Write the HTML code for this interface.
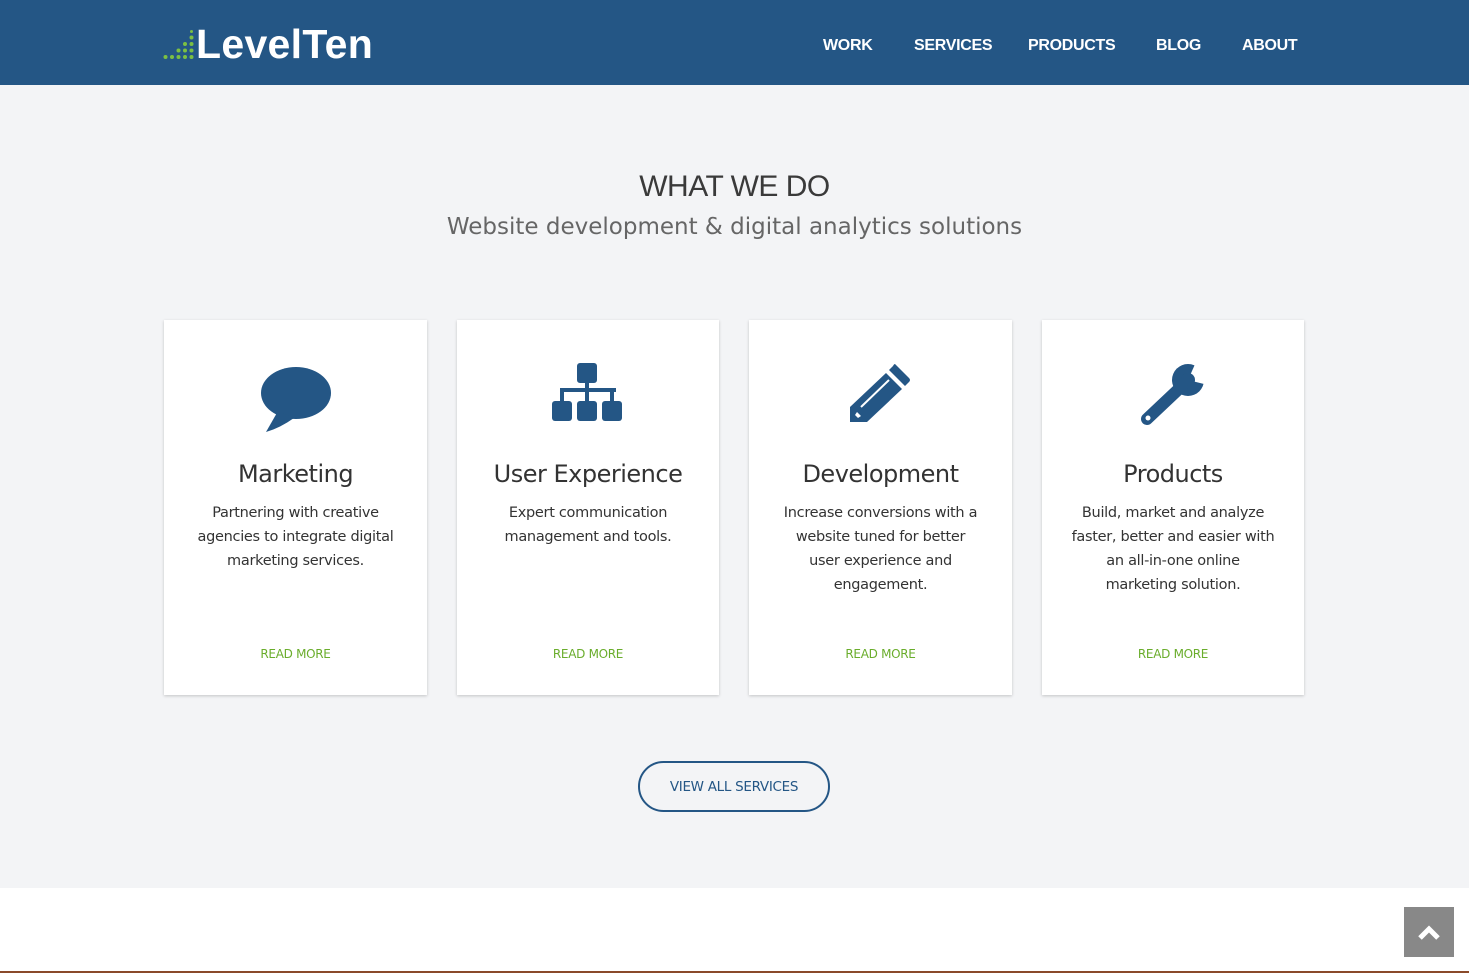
<!DOCTYPE html>
<html><head><meta charset="utf-8"><style>
*{margin:0;padding:0;box-sizing:border-box}
body{width:1469px;height:973px;overflow:hidden;background:#f3f4f6;font-family:"Liberation Sans",sans-serif;position:relative}
.hdr{position:absolute;left:0;top:0;width:1469px;height:85px;background:#245685}
.logo{position:absolute;left:196px;top:22px;color:#fff;font-weight:bold;font-size:41px;letter-spacing:0.3px;line-height:44px}
.nav{position:absolute;top:37px;color:#fff;font-weight:bold;font-size:16px;letter-spacing:-0.3px}
h1{position:absolute;left:0;width:1469px;top:170px;text-align:center;font-weight:normal;font-size:30px;color:#3a3a3a;letter-spacing:-0.5px}
.sub{position:absolute;left:0;width:1469px;top:214px;text-align:center;font-size:23px;color:#666;font-family:"DejaVu Sans",sans-serif;letter-spacing:0;font-weight:normal}
.card{position:absolute;top:320px;height:375px;background:#fff;box-shadow:0 1px 3px rgba(0,0,0,.2);text-align:center}
.card svg{position:absolute;left:50%;top:40px;transform:translateX(-50%)}
.card h2{position:absolute;top:140px;width:100%;font-weight:normal;font-size:24px;color:#333;font-family:"DejaVu Sans",sans-serif;letter-spacing:-0.5px}
.card p{position:absolute;top:181px;left:0;right:0;font-size:14.5px;line-height:24px;color:#333;font-family:"DejaVu Sans",sans-serif;letter-spacing:-0.3px;white-space:nowrap}
.card a{position:absolute;top:327px;width:100%;left:0;font-size:12px;color:#6aad2c;text-decoration:none;font-family:"DejaVu Sans",sans-serif;letter-spacing:-0.3px}
.btn{position:absolute;left:638px;top:761px;width:192px;height:51px;border:2px solid #245685;border-radius:26px;color:#245685;font-size:13.5px;text-align:center;line-height:49px;font-family:"DejaVu Sans",sans-serif;letter-spacing:-0.3px}
.foot{position:absolute;left:0;top:888px;width:1469px;height:85px;background:#fff;border-bottom:2px solid #8a4a2a}
.top{position:absolute;left:1404px;top:907px;width:50px;height:50px;background:#888}
</style></head><body>
<div class="hdr">
<svg style="position:absolute;left:163px;top:30px" width="32" height="30" viewBox="0 0 32 30" fill="#7bc043">
<circle cx="2.5" cy="27" r="2"/><circle cx="9" cy="27" r="2"/><circle cx="15.5" cy="27" r="2"/><circle cx="22" cy="27" r="2"/><circle cx="28.5" cy="27" r="2"/>
<circle cx="15.5" cy="20.5" r="2"/><circle cx="22" cy="20.5" r="2"/><circle cx="28.5" cy="20.5" r="2"/>
<circle cx="22" cy="14" r="2"/><circle cx="28.5" cy="14" r="2"/><circle cx="28.5" cy="7.5" r="2"/><circle cx="28.5" cy="1.5" r="1.5"/></svg>
<div class="logo">LevelTen</div>
<div class="nav" style="left:823px">WORK</div>
<div class="nav" style="left:914px">SERVICES</div>
<div class="nav" style="left:1028px">PRODUCTS</div>
<div class="nav" style="left:1156px">BLOG</div>
<div class="nav" style="left:1242px">ABOUT</div>
</div>
<h1>WHAT WE DO</h1>
<div class="sub">Website development &amp; digital analytics solutions</div>

<div class="card" style="left:164px;width:263px">
<svg width="72" height="68" viewBox="0 0 72 68" style="top:46px"><ellipse cx="36" cy="27" rx="35" ry="26" fill="#245685"/><path d="M18 45 L6 66 Q20 62 34 52 Z" fill="#245685"/></svg>
<h2>Marketing</h2><p>Partnering with creative<br>agencies to integrate digital<br>marketing services.</p><a>READ MORE</a></div>

<div class="card" style="left:457px;width:262px">
<svg width="72" height="64" viewBox="0 0 72 64" fill="#245685"><rect x="25" y="3" width="20" height="20" rx="3"/><rect x="0" y="41" width="20" height="20" rx="3"/><rect x="25" y="41" width="20" height="20" rx="3"/><rect x="50" y="41" width="20" height="20" rx="3"/><rect x="33" y="20" width="4" height="22"/><rect x="8" y="28" width="56" height="4"/><rect x="8" y="28" width="4" height="14"/><rect x="58" y="28" width="4" height="14"/></svg>
<h2>User Experience</h2><p>Expert communication<br>management and tools.</p><a>READ MORE</a></div>

<div class="card" style="left:749px;width:263px">
<svg width="64" height="64" viewBox="0 0 64 64" fill="#245685"><path d="M46 4 L60 18 Q62 20 60 22 L56 26 L40 10 L44 6 Q45 4 46 4Z"/><path d="M37 13 L53 29 L18 62 L1 62 L1 47 Z"/><path d="M40 20 L12 47" stroke="#fff" stroke-width="2"/><path d="M8 52 L12 56 L9 58 L6 55Z" fill="#fff"/></svg>
<h2>Development</h2><p>Increase conversions with a<br>website tuned for better<br>user experience and<br>engagement.</p><a>READ MORE</a></div>

<div class="card" style="left:1042px;width:262px">
<svg width="70" height="68" viewBox="0 0 70 68"><circle cx="50" cy="20" r="16" fill="#245685"/><path d="M50 20 L58 2 L72 10 L66 24 Z" fill="#fff"/><circle cx="50" cy="20" r="7" fill="#245685"/><path d="M44 26 L9 59" stroke="#245685" stroke-width="12" stroke-linecap="round"/><circle cx="10" cy="58" r="2.5" fill="#fff"/></svg>
<h2>Products</h2><p>Build, market and analyze<br>faster, better and easier with<br>an all-in-one online<br>marketing solution.</p><a>READ MORE</a></div>

<div class="btn">VIEW ALL SERVICES</div>
<div class="foot"></div>
<div class="top"><svg width="50" height="50" viewBox="0 0 50 50"><path d="M16 31 L25 22 L34 31" stroke="#fff" stroke-width="5" fill="none"/></svg></div>
</body></html>
